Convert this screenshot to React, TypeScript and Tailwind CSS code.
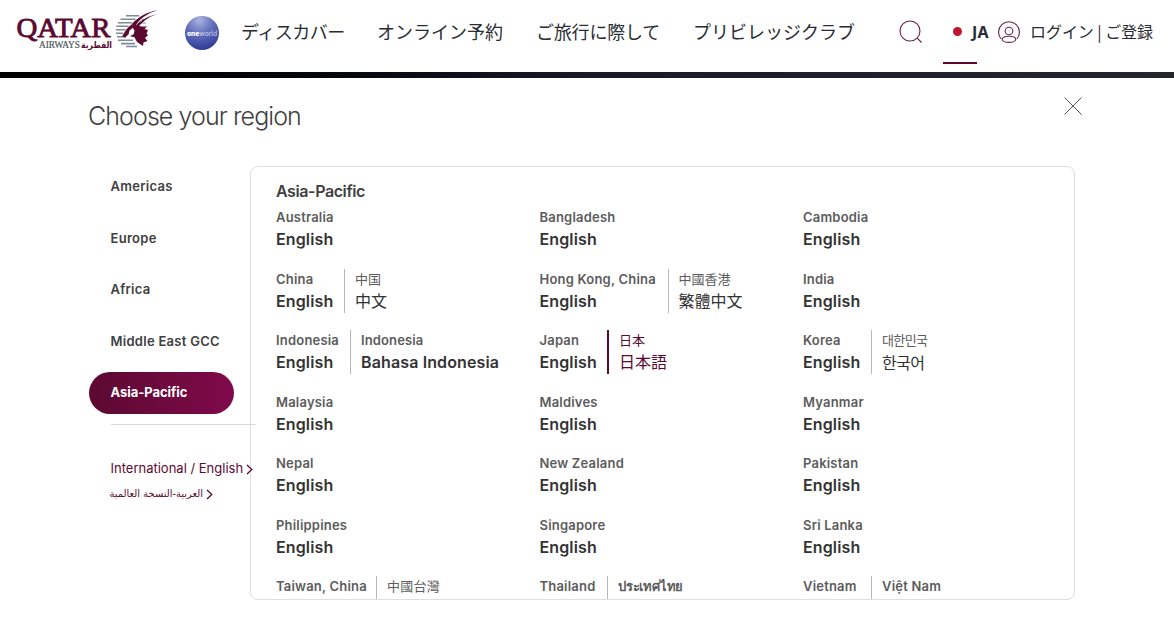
import React from "react";

type Entry = {
  country: string;
  language?: string;
  localCountry?: string;
  localLanguage?: string;
  width?: string;
  current?: boolean;
  localClass?: string;
};

const regions = ["Americas", "Europe", "Africa", "Middle East GCC"];

const entries: Entry[] = [
  { country: "Australia", language: "English" },
  { country: "Bangladesh", language: "English" },
  { country: "Cambodia", language: "English" },
  { country: "China", language: "English", localCountry: "中国", localLanguage: "中文", width: "w-[68px]" },
  { country: "Hong Kong, China", language: "English", localCountry: "中國香港", localLanguage: "繁體中文", width: "w-[128px]" },
  { country: "India", language: "English" },
  { country: "Indonesia", language: "English", localCountry: "Indonesia", localLanguage: "Bahasa Indonesia", width: "w-[74px]", localClass: "font-semibold tracking-[0.13px]" },
  { country: "Japan", language: "English", localCountry: "日本", localLanguage: "日本語", width: "w-[67.5px]", current: true },
  { country: "Korea", language: "English", localCountry: "대한민국", localLanguage: "한국어", width: "w-[68px]", localClass: "font-['Noto_Sans_CJK_KR'] tracking-[-0.6px]" },
  { country: "Malaysia", language: "English" },
  { country: "Maldives", language: "English" },
  { country: "Myanmar", language: "English" },
  { country: "Nepal", language: "English" },
  { country: "New Zealand", language: "English" },
  { country: "Pakistan", language: "English" },
  { country: "Philippines", language: "English" },
  { country: "Singapore", language: "English" },
  { country: "Sri Lanka", language: "English" },
  { country: "Taiwan, China", localCountry: "中國台灣", width: "w-[100px]", localClass: "tracking-[0.25px]" },
  { country: "Thailand", localCountry: "ประเทศไทย", width: "w-[67.5px]", localClass: "font-bold tracking-[-0.2px]" },
  { country: "Vietnam", localCountry: "Việt Nam", width: "w-[68px]", localClass: "font-semibold tracking-[0.2px]" },
];

function QatarLogo() {
  return (
    <svg width="144" height="46" viewBox="16 8 144 46" className="shrink-0" aria-label="Qatar Airways">
      <text x="16.500" y="36.700" fontSize="27" textLength="94" lengthAdjust="spacingAndGlyphs" fill="#5c0931" stroke="#5c0931" strokeWidth="0.800" fontFamily="Liberation Serif, serif">QATAR</text>
      <text x="39" y="48" fontSize="9.600" textLength="41" lengthAdjust="spacingAndGlyphs" fill="#4b5660" stroke="#4b5660" strokeWidth="0.200" fontFamily="Liberation Serif, serif">AIRWAYS</text>
      <text x="81" y="47.500" fontSize="9" textLength="31" lengthAdjust="spacingAndGlyphs" fill="#5c0931" fontWeight="bold" fontFamily="DejaVu Sans, sans-serif" direction="ltr">القطرية</text>
      <g stroke="#7d8c96" strokeWidth="1.600">
        <path d="M126 15.800h13M120.500 19.300h15M118 22.800h14M116.500 26.300h12M116 29.800h9.500M116 33.300h7M117 36.800h9M118 40.300h15M121 43.600h14M126 46.500h11" />
        <path d="M142 19.700h3M140 23h6" strokeWidth="1.200" />
      </g>
      <g fill="#5c0931">
        <path d="M157.500 10.200C147 12 137.500 17 131.500 24.500L135.500 25.500C140 18.500 148 13 157.500 10.200Z" />
        <path d="M157 14.300C148.500 16 141 20 136 25.300L139 26C144 20.500 149 16.800 157 14.300Z" />
        <path d="M131.500 24.500L127.500 28L125 31.500L122 36.500L125 37.500L128.500 34.500L129.500 30.500L132.700 27.800L134.500 30.500L133.800 34L130 36.200L134.500 37.200L137 42L143 46L143.500 42.500L147.500 41L145 38L148 35.300L146.500 33.500L148 30L144.500 29L147 26.500H141L138.500 25.300Z" />
      </g>
    </svg>
  );
}

function OneworldLogo() {
  return (
    <svg width="34" height="34" viewBox="0 0 34 34" className="ml-[25px] shrink-0" aria-label="oneworld">
      <defs>
        <radialGradient id="globe" cx="0.42" cy="0.12" r="0.95">
          <stop offset="0" stopColor="#a9b3e0" />
          <stop offset="0.42" stopColor="#6571bc" />
          <stop offset="1" stopColor="#273390" />
        </radialGradient>
      </defs>
      <circle cx="17" cy="17" r="17" fill="url(#globe)" />
      <text x="2" y="19.500" fontSize="7" fontFamily="Inter, sans-serif" fill="white" textLength="30" lengthAdjust="spacingAndGlyphs">
        <tspan fontWeight="800">one</tspan><tspan fill="#d5daf3">world</tspan>
      </text>
    </svg>
  );
}

function Header() {
  return (
    <header className="flex h-[72px] items-start whitespace-nowrap pl-4 font-['Noto_Sans_CJK_JP',sans-serif] text-[#292d33]">
      <div className="flex h-[66px] items-center pb-1"><QatarLogo /></div>
      <div className="flex h-[66px] items-center"><OneworldLogo /></div>
      <nav className="ml-[22px] flex h-[62px] items-center text-[18px]">
        <span className="w-[136px] tracking-[-0.5px]">ディスカバー</span>
        <span className="w-[159px]">オンライン予約</span>
        <span className="w-[157px] tracking-[-0.2px]">ご旅行に際して</span>
        <span className="w-[206px]">プリビレッジクラブ</span>
      </nav>
      <svg width="24" height="24" viewBox="0 0 24 24" className="mt-5 shrink-0" fill="none" stroke="#6e2049" strokeWidth="1.1">
        <circle cx="11" cy="11" r="10" />
        <path d="m18.200 18.200 4.300 4.300" />
      </svg>
      <div className="ml-5 flex h-16 w-[34px] items-center border-b-2 border-[#5c0931] pl-[10px]">
        <span className="size-[9px] shrink-0 rounded-full bg-[#bf1733]" />
        <span className="ml-[10px] pt-px font-['Noto_Sans',sans-serif] text-[16px] font-bold tracking-[0.2px]">JA</span>
      </div>
      <svg width="22" height="22" viewBox="0 0 22 22" className="ml-[21px] mt-[21px] shrink-0" fill="none" stroke="#6e2049" strokeWidth="1.1">
        <path d="M3.200 18A10.400 10.400 0 1 1 18.800 18" />
        <circle cx="11" cy="10" r="3.800" />
        <ellipse cx="11" cy="18.300" rx="6.800" ry="3.100" />
      </svg>
      <span className="ml-[10px] flex h-[61px] items-center text-[16px] tracking-[-0.05px]">ログイン | ご登録</span>
    </header>
  );
}

function Chevron() {
  return (
    <svg width="7" height="11" viewBox="0 0 7 11" className="shrink-0" fill="none" stroke="#5c0931" strokeWidth="1.300">
      <path d="m1 1 4.800 4.500L1 10" />
    </svg>
  );
}

function Sidebar() {
  return (
    <aside className="relative z-10 w-[161px] shrink-0 whitespace-nowrap text-[13px]">
      <ul className="font-semibold tracking-[0.28px] text-[#404040]">
        {regions.map((region) => (
          <li key={region} className="flex h-[51.5px] items-start pl-[21.500px]">
            <span className="flex h-[42px] items-center">{region}</span>
          </li>
        ))}
        <li className="flex h-[42px] w-[145px] items-center rounded-full bg-linear-to-r from-[#5c0931] to-[#80094b] pl-[21.500px] font-bold tracking-[-0.05px] text-white">
          Asia-Pacific
        </li>
      </ul>
      <hr className="ml-[22px] mt-[10px] w-[145px] border-t border-[#d8d8d8]" />
      <a className="ml-[21.500px] mt-[34px] flex h-5 items-center gap-[3px] text-[#5c0931]">
        <span className="w-[134px]">International / English</span>
        <Chevron />
      </a>
      <a className="ml-[21px] mt-[5px] flex h-5 items-center gap-[3px] text-[#5c0931]">
        <span dir="rtl" className="w-[93px] text-right font-['DejaVu_Sans',sans-serif] text-[9.900px]">العربية-النسخة العالمية</span>
        <Chevron />
      </a>
    </aside>
  );
}

function Country({ entry }: { entry: Entry }) {
  return (
    <div className="flex h-[61.500px] items-start">
      <div className={entry.width ?? "w-auto"}>
        <div className="h-5 text-[13px] font-semibold leading-5 tracking-[0.2px] text-[#5c5c5c]">{entry.country}</div>
        {entry.language && (
          <div className="h-6 text-[16px] font-semibold leading-6 tracking-[0.13px] text-[#333333]">{entry.language}</div>
        )}
      </div>
      {entry.localCountry && (
        <div
          className={
            entry.current
              ? "h-11 border-l-2 border-[#5c0931] pl-[10px] text-[#5c0931]"
              : "h-11 border-l border-[#b8b8b8] pl-[10px]"
          }
        >
          <div className={entry.current ? "h-5 text-[13px] leading-5" : `h-5 text-[13px] leading-5 text-[#5c5c5c] ${entry.localClass ?? ""}`}>
            {entry.localCountry}
          </div>
          {entry.localLanguage && (
            <div className={entry.current ? "h-6 text-[16px] leading-6" : `h-6 text-[16px] leading-6 text-[#333333] ${entry.localClass ?? ""}`}>
              {entry.localLanguage}
            </div>
          )}
        </div>
      )}
    </div>
  );
}

export default function App() {
  return (
    <div className="h-[619px] w-[1174px] overflow-hidden bg-white font-['Inter','Noto_Sans_CJK_JP',sans-serif]">
      <Header />
      <div className="h-[6px] bg-linear-to-r from-black via-[#171b26] to-[#23272c]" />
      <main className="pl-[89px] pr-[99px]">
        <div className="flex h-[88px] items-start justify-between">
          <h1 className="-ml-px mt-5 text-[25px] font-light leading-9 tracking-[-0.920px] text-[#404040]">Choose your region</h1>
          <svg width="18" height="18" viewBox="0 0 18 18" className="-mr-[7px] mt-[19px]" fill="none" stroke="#555" strokeWidth="1">
            <path d="m.5.5 17 17M17.500.500l-17 17" />
          </svg>
        </div>
        <div className="flex">
          <Sidebar />
          <section className="h-[434px] w-[825px] shrink-0 overflow-hidden whitespace-nowrap rounded-lg border border-[#dedede] pl-[25px]">
            <h2 className="mt-[13px] h-[27px] text-[16px] font-semibold leading-[22px] tracking-[-0.4px] text-[#404040]">Asia-Pacific</h2>
            <div className="grid grid-cols-[263.500px_263.500px_263.500px]">
              {entries.map((entry) => (
                <Country key={entry.country} entry={entry} />
              ))}
            </div>
          </section>
        </div>
      </main>
    </div>
  );
}
